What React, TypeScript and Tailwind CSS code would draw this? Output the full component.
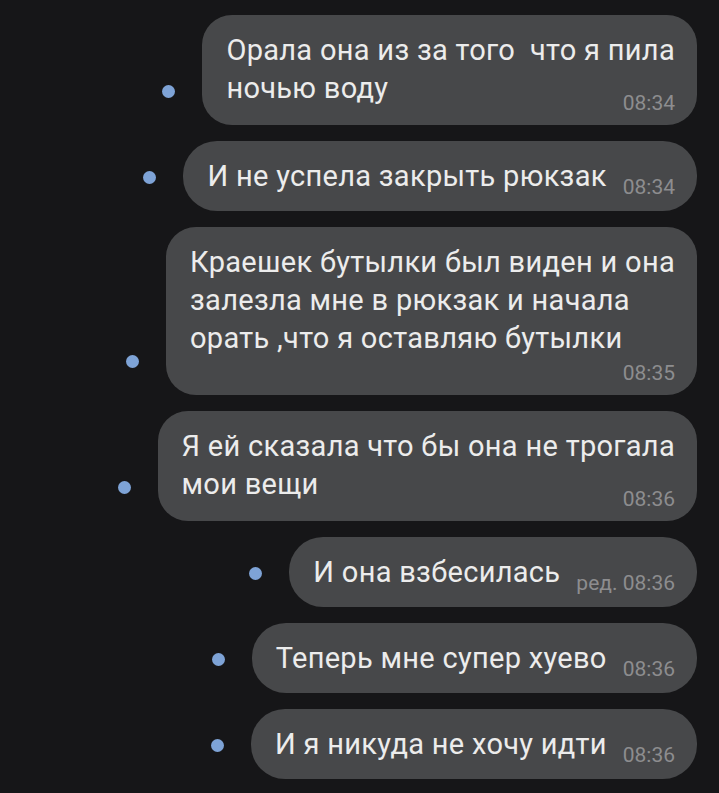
type Msg = {
  lines: string[]
  time: string
  inline?: boolean
  below?: boolean
}

const messages: Msg[] = [
  { lines: ['Орала она из за того\u00a0 что я пила', 'ночью воду'], time: '08:34' },
  { lines: ['И не успела закрыть рюкзак'], time: '08:34', inline: true },
  { lines: ['Краешек бутылки был виден и она', 'залезла мне в рюкзак и начала', 'орать ,что я оставляю бутылки'], time: '08:35', below: true },
  { lines: ['Я ей сказала что бы она не трогала', 'мои вещи'], time: '08:36' },
  { lines: ['И она взбесилась'], time: 'ред. 08:36', inline: true },
  { lines: ['Теперь мне супер хуево'], time: '08:36', inline: true },
  { lines: ['И я никуда не хочу идти'], time: '08:36', inline: true },
]

function Bubble({ msg }: { msg: Msg }) {
  if (msg.inline) {
    return (
      <div className="flex items-end rounded-[34px] bg-[#47484a] pl-6 pr-[22px] py-4">
        <span className="whitespace-nowrap text-[29px] leading-[38px] tracking-[0.3px] text-[#ececec]">{msg.lines[0]}</span>
        <span className="ml-4 mb-[-4px] whitespace-nowrap text-[21px] leading-[24px] text-[#8d8d8f]">{msg.time}</span>
      </div>
    )
  }

  return (
    <div className="flex flex-col rounded-[30px] bg-[#47484a] pl-6 pr-[22px] pt-4 pb-[10px]">
      <div className="text-[29px] leading-[38px] tracking-[0.3px] text-[#ececec]">
        {msg.lines.map((line, i) => (
          <div key={i} className="whitespace-nowrap">{line}</div>
        ))}
      </div>
      <div className={`flex justify-end text-[21px] leading-[24px] text-[#8d8d8f] ${msg.below ? 'mt-[4px]' : 'mt-[-16px]'}`}>
        {msg.time}
      </div>
    </div>
  )
}

export default function App() {
  return (
    <div
      className="min-h-[793px] w-[719px] overflow-hidden bg-[#161618] pt-[15px] pr-[22px]"
      style={{ fontFamily: 'Roboto, "Noto Sans", sans-serif' }}
    >
      <div className="flex flex-col items-end gap-4">
        {messages.map((m, i) => (
          <div key={i} className="flex items-end gap-[27px]">
            <div className="mb-[27px] h-[13px] w-[13px] rounded-full bg-[#7ea3d6]" />
            <Bubble msg={m} />
          </div>
        ))}
      </div>
    </div>
  )
}
